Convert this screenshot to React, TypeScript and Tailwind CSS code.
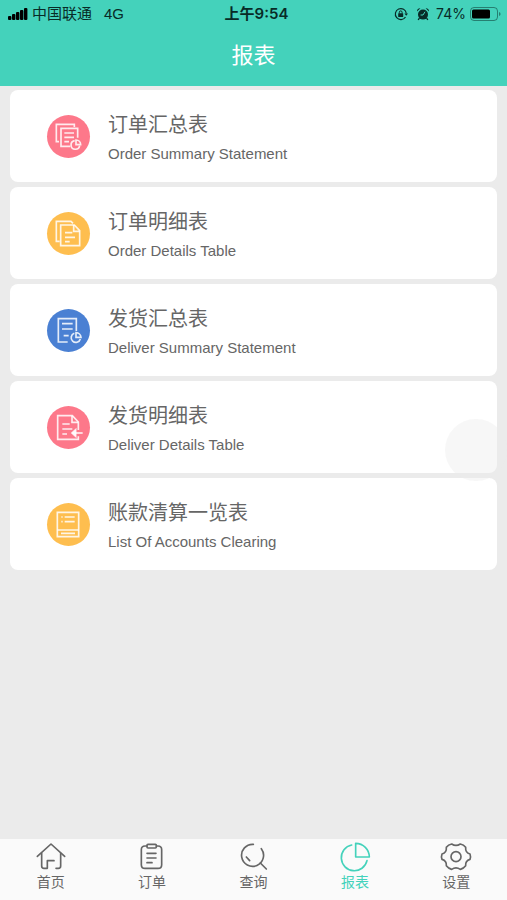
import { ReactNode } from 'react';
import clsx from 'clsx';

interface Report {
  title: string;
  subtitle: string;
  color: string;
  icon: ReactNode;
}

interface Tab {
  label: string;
  icon: ReactNode;
  active?: boolean;
}

const reports: Report[] = [
  {
    title: '订单汇总表',
    subtitle: 'Order Summary Statement',
    color: 'bg-[#fd788a]',
    icon: (
      <>
        <path d="M36 80H28V28H82V36" />
        <path d="M70 94H42V40H92V68" />
        <path d="M52 54H81M52 67H81M52 80H66" />
        <path d="M83 77a13 13 0 1 0 15 15" />
        <path d="M87 75v14h14a14 14 0 0 0-14-14z" />
      </>
    ),
  },
  {
    title: '订单明细表',
    subtitle: 'Order Details Table',
    color: 'bg-[#febe4f]',
    icon: (
      <>
        <path d="M38 88H28V28H72L78 34" />
        <path d="M41 39H82L98 56V101H41z" />
        <path d="M80 39V58H98" />
        <path d="M54 62H76M54 76H84M54 89H68" />
      </>
    ),
  },
  {
    title: '发货汇总表',
    subtitle: 'Deliver Summary Statement',
    color: 'bg-[#4a80d3]',
    icon: (
      <>
        <path d="M62 99H34V29H88V66" />
        <path d="M45 44H77M45 60H77M50 80H65" />
        <path d="M82 73a14 14 0 1 0 18 17" />
        <path d="M87 71v14h15a15 15 0 0 0-15-14z" />
      </>
    ),
  },
  {
    title: '发货明细表',
    subtitle: 'Deliver Details Table',
    color: 'bg-[#fd788a]',
    icon: (
      <>
        <path d="M94 72V48L76 29H32V100H94V91" />
        <path d="M75 30V49H94" />
        <path d="M46 54H68M46 69H76M46 84H60" />
        <path d="M107 81H76" />
        <path d="M86 71L75 81L86 91z" fill="#fff" fillOpacity="0.85" />
      </>
    ),
  },
  {
    title: '账款清算一览表',
    subtitle: 'List Of Accounts Clearing',
    color: 'bg-[#febe4f]',
    icon: (
      <>
        <path d="M31 28H95V101H31z" />
        <path d="M31 81H95M42 91H84" />
        <path d="M43 42H47M53 42H83M43 56H47M53 56H83" />
      </>
    ),
  },
];

const tabs: Tab[] = [
  {
    label: '首页',
    icon: (
      <>
        <path d="M4 40L45 3L86 40" />
        <path d="M17 31V69Q17 76 24 76H34V53H54" />
        <path d="M60 76H67Q74 76 74 69V31" />
      </>
    ),
  },
  {
    label: '订单',
    icon: (
      <>
        <path d="M30 9H24Q13 9 13 20V65Q13 76 24 76H63Q74 76 74 65V20Q74 9 63 9H58" />
        <path d="M33 4H55Q58 4 58 7V12Q58 15 55 15H33Q30 15 30 12V7Q30 4 33 4z" />
        <path d="M30 31H57M30 45H57M30 59H45" />
      </>
    ),
  },
  {
    label: '查询',
    icon: (
      <>
        <path d="M43 4A33 33 0 1 0 67 17" />
        <path d="M64 60L82 78" />
        <path d="M22 42L32 53" />
      </>
    ),
  },
  {
    label: '报表',
    active: true,
    icon: (
      <>
        <path d="M35 6A39 39 0 1 0 81 53" />
        <path d="M47 1V42H88A41 41 0 0 0 47 1z" />
      </>
    ),
  },
  {
    label: '设置',
    icon: (
      <>
        <path d="M32 3C41 9 49 9 58 3Q68 5 74 13C73 24 77 30 87 33Q90 41 87 49C77 52 73 58 74 68Q68 76 58 79C49 73 41 73 32 79Q22 76 16 68C17 58 13 52 3 49Q0 41 3 33C13 30 17 24 16 13Q22 5 32 3z" />
        <circle cx="45" cy="41" r="15" />
      </>
    ),
  },
];

function StatusBar() {
  return (
    <div className="grid h-7 grid-cols-[1fr_auto_1fr] items-center pl-2 pr-0.5 text-[#082b27]">
      <div className="flex items-center text-[15px] leading-5">
        <svg viewBox="0 0 20 12" className="mr-1 h-3 w-5" fill="#000">
          <rect x="0" y="8" width="3.4" height="4" rx="1" />
          <rect x="4" y="6" width="3.4" height="6" rx="1" />
          <rect x="8" y="4" width="3.4" height="8" rx="1" />
          <rect x="12" y="2" width="3.4" height="10" rx="1" />
          <rect x="16" y="0" width="3.4" height="12" rx="1" />
        </svg>
        <span>中国联通</span>
        <span className="ml-3">4G</span>
      </div>
      <time className="font-['Inter','Noto_Sans_CJK_SC',sans-serif] text-[15px] font-semibold leading-5">上午9:54</time>
      <div className="flex items-center justify-end">
        <svg viewBox="0 0 14 14" className="h-[14px] w-[14px]" fill="none" stroke="currentColor" strokeWidth="1.2">
          <path d="M11.5 10A5.5 5.5 0 1 1 12.3 6.5" />
          <path d="M10.4 6.4h3.6l-1.8 2.4z" fill="currentColor" stroke="none" />
          <rect x="4.2" y="6.3" width="5" height="3.7" rx="0.5" fill="currentColor" stroke="none" />
          <path d="M5.3 6.5V5.3a1.4 1.4 0 0 1 2.8 0v1.2" strokeWidth="1" />
        </svg>
        <svg viewBox="0 0 14 14" className="ml-2 h-[14px] w-[14px]" fill="currentColor">
          <circle cx="7" cy="7.6" r="5" />
          <path d="M1 4.4A3 3 0 0 1 4.4 1.2zM13 4.4A3 3 0 0 0 9.6 1.2z" />
          <path d="M3.4 11L2.2 13M10.6 11l1.2 2" stroke="currentColor" strokeWidth="1.4" />
          <path d="M9 4.8L7 8H4.6" fill="none" stroke="#44d2bb" strokeWidth="1" />
        </svg>
        <span className="ml-1.5 font-['Inter',sans-serif] text-[14px] leading-5">74%</span>
        <svg viewBox="0 0 31 14" className="ml-1 mr-1 h-[14px] w-[31px]">
          <rect x="0.5" y="0.5" width="27" height="13" rx="3.5" fill="none" stroke="currentColor" strokeOpacity="0.5" />
          <rect x="2" y="2.5" width="18" height="9" rx="1.5" fill="#000" />
          <path d="M29 5v4q1.6-.6 1.6-2T29 5z" fill="currentColor" fillOpacity="0.5" />
        </svg>
      </div>
    </div>
  );
}

function ReportCard({ report }: { report: Report }) {
  return (
    <a href="#" className="flex h-[92px] items-center rounded-lg bg-white pl-[37px]">
      <span className={clsx('h-[43px] w-[43px] shrink-0 rounded-full', report.color)}>
        <svg viewBox="0 0 129 129" className="h-full w-full" fill="none" stroke="#fff" strokeOpacity="0.85" strokeWidth="5">
          {report.icon}
        </svg>
      </span>
      <span className="ml-[18px] flex flex-col gap-[6px] pt-1">
        <span className="text-[20px] leading-[26px] text-[#666]">{report.title}</span>
        <span className="text-[15px] leading-5 text-[#666]">{report.subtitle}</span>
      </span>
    </a>
  );
}

export default function App() {
  return (
    <div className="relative flex min-h-screen flex-col bg-[#ebebeb] font-['Liberation_Sans','Noto_Sans_CJK_SC',sans-serif]">
      <header className="bg-[#44d2bb]">
        <StatusBar />
        <h1 className="h-[58px] text-center text-[22px] leading-[56px] text-white">报表</h1>
      </header>

      <main className="flex flex-1 flex-col gap-[5px] px-[10px] pt-1">
        {reports.map((report) => (
          <ReportCard key={report.title} report={report} />
        ))}
      </main>

      <nav className="flex h-[61px] bg-[#fafafa]">
        {tabs.map((tab) => (
          <a
            key={tab.label}
            href="#"
            className={clsx('flex flex-1 flex-col items-center pt-1', tab.active ? 'text-[#44d2bb]' : 'text-[#666]')}
          >
            <svg
              viewBox="0 0 90 84"
              className="h-7 w-[30px] overflow-visible"
              fill="none"
              stroke="currentColor"
              strokeWidth="5"
              strokeLinejoin="round"
              strokeLinecap="round"
            >
              {tab.icon}
            </svg>
            <span className="text-[14px] leading-[23px]">{tab.label}</span>
          </a>
        ))}
      </nav>

      {/* floating assistive touch button */}
      <button
        type="button"
        aria-label="AssistiveTouch"
        className="absolute right-0 top-[419px] h-[62px] w-[62px] rounded-full bg-[#ebebeb]/40"
      />
    </div>
  );
}
